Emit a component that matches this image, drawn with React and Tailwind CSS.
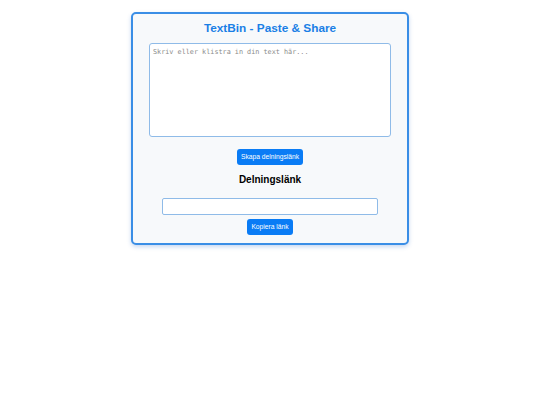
import React, { useState } from 'react'

const App = () => {
  const [text, setText] = useState('')
  const [link, setLink] = useState('')

  return (
    <div className="w-[540px] h-[405px] bg-white flex justify-center" style={{ fontFamily: '"Liberation Sans", Arial, sans-serif' }}>
      <div className="mt-[12px] w-[278px] h-fit bg-[#f7f9fb] border-2 border-[#3a8ee6] rounded-[5px] shadow-[0_2px_4px_rgba(30,100,200,0.25)] px-[16px] pt-[7px] pb-[8px] flex flex-col items-center">
        <h1 className="text-[11.8px] leading-[14px] font-bold text-[#1a7fe6] mb-[8px]">
          TextBin - Paste &amp; Share
        </h1>
        <textarea
          value={text}
          onChange={(e) => setText(e.target.value)}
          placeholder="Skriv eller klistra in din text här..."
          className="w-[242px] h-[94px] bg-white border border-[#8fbbe8] rounded-[3px] px-[3px] pt-[4px] text-[6.8px] leading-[9px] resize-none outline-none placeholder:text-[#8a8a8a]"
          style={{ fontFamily: '"DejaVu Sans Mono", "Liberation Mono", monospace' }}
        />
        <button className="mt-[12px] h-[16px] px-[4px] bg-[#0a7cf5] text-white text-[6.7px] rounded-[3px]">
          Skapa delningslänk
        </button>
        <h2 className="mt-[9px] text-[10px] leading-[12px] font-bold text-black">
          Delningslänk
        </h2>
        <input
          value={link}
          readOnly
          onChange={(e) => setLink(e.target.value)}
          className="mt-[12px] w-[216px] h-[17px] bg-white border border-[#8fbbe8] rounded-[2px] outline-none"
        />
        <button className="mt-[4px] h-[16px] px-[4px] bg-[#0a7cf5] text-white text-[6.7px] rounded-[3px]">
          Kopiera länk
        </button>
      </div>
    </div>
  )
}

export default App
